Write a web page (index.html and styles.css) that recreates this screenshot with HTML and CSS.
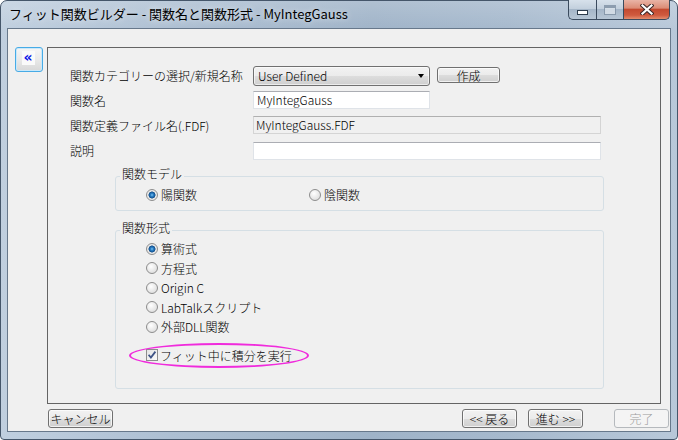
FILE: index.html
```html
<!DOCTYPE html>
<html lang="ja">
<head>
    <meta charset="UTF-8">
    <meta name="viewport" content="width=device-width, initial-scale=1.0">
    <title>フィット関数ビルダー</title>
    <link rel="stylesheet" href="styles.css">
</head>
<body>
    <div class="window">
        <div class="titlebar">
            <span class="title">フィット関数ビルダー - 関数名と関数形式 - MyIntegGauss</span>
            <div class="caption-buttons">
                <span class="cap-btn cap-min"><i class="min-icon"></i></span>
                <span class="cap-btn cap-max"><i class="max-icon"></i></span>
                <span class="cap-btn cap-close">
                    <svg width="14" height="11" viewBox="0 0 14 11">
                        <path d="M2.5 1.5 L11.5 9.5 M11.5 1.5 L2.5 9.5" stroke="#3b2626" stroke-width="4.2" stroke-linecap="square"/>
                        <path d="M2.5 1.5 L11.5 9.5 M11.5 1.5 L2.5 9.5" stroke="#fff" stroke-width="2.2" stroke-linecap="square"/>
                    </svg>
                </span>
            </div>
        </div>

        <div class="client">
            <div class="main-row">
                <button class="collapse-btn"><span class="collapse-icon">&laquo;</span></button>

                <div class="panel">
                    <div class="form-grid">
                        <span class="form-label">関数カテゴリーの選択/新規名称</span>
                        <div class="field-row">
                            <div class="combo">
                                <span>User Defined</span>
                                <span class="combo-arrow"></span>
                            </div>
                            <button class="btn btn-create">作成</button>
                        </div>

                        <span class="form-label">関数名</span>
                        <div class="textbox short">MyIntegGauss</div>

                        <span class="form-label">関数定義ファイル名(.FDF)</span>
                        <div class="textbox long readonly">MyIntegGauss.FDF</div>

                        <span class="form-label">説明</span>
                        <div class="textbox long last"></div>
                    </div>

                    <fieldset class="group group-model">
                        <legend>関数モデル</legend>
                        <div class="option-row">
                            <span class="option"><span class="radio checked"></span>陽関数</span>
                            <span class="option"><span class="radio"></span>陰関数</span>
                        </div>
                    </fieldset>

                    <fieldset class="group group-form">
                        <legend>関数形式</legend>
                        <ul class="radio-list">
                            <li><span class="radio checked"></span>算術式</li>
                            <li><span class="radio"></span>方程式</li>
                            <li><span class="radio"></span>Origin C</li>
                            <li><span class="radio"></span>LabTalkスクリプト</li>
                            <li><span class="radio"></span>外部DLL関数</li>
                        </ul>
                        <div class="check-option">
                            <span class="checkbox">
                                <svg width="10" height="10" viewBox="0 0 10 10">
                                    <path d="M1.6 4.8 L3.9 7.6 L8.4 1.6" fill="none" stroke="#3f5487" stroke-width="1.8"/>
                                </svg>
                            </span>
                            フィット中に積分を実行
                            <span class="highlight"></span>
                        </div>
                    </fieldset>
                </div>
            </div>

            <div class="footer">
                <button class="btn btn-cancel">キャンセル</button>
                <div class="nav">
                    <button class="btn btn-nav">&lt;&lt; 戻る</button>
                    <button class="btn btn-nav btn-next">進む &gt;&gt;</button>
                    <button class="btn btn-nav btn-finish" disabled>完了</button>
                </div>
            </div>
        </div>
    </div>
</body>
</html>
```

FILE: styles.css
```css
* {
    box-sizing: border-box;
}

body {
    margin: 0;
    background: #fff;
    font-family: "Noto Sans CJK JP", "Noto Sans", sans-serif;
    font-size: 12px;
    font-weight: 300;
    color: #000;
}

/* window frame */
.window {
    width: 678px;
    height: 440px;
    display: flex;
    flex-direction: column;
    padding: 0 6px 7px;
    border: 1px solid #45566a;
    border-radius: 7px 7px 4px 4px;
    background:
        linear-gradient(rgba(255, 255, 255, 0.18), rgba(255, 255, 255, 0) 30px),
        linear-gradient(to right, #c0cfdf 0%, #adbfd2 25%, #9fb3c8 55%, #a6b9cd 75%, #b8c8d9 100%);
}

.titlebar {
    height: 27px;
    display: flex;
    justify-content: space-between;
    align-items: flex-start;
    flex: none;
}

.title {
    padding-left: 2px;
    font-size: 13px;
    font-weight: 400;
    line-height: 26px;
    white-space: nowrap;
    text-shadow: 0 0 6px rgba(255, 255, 255, 0.7);
}

.caption-buttons {
    display: flex;
    margin-top: -1px;
    margin-right: 1px;
}

.cap-btn {
    height: 20px;
    display: flex;
    justify-content: center;
    border: 1px solid #3b4b5e;
    border-top: none;
}

.cap-min {
    width: 28px;
    align-items: flex-end;
    padding-bottom: 4px;
    border-right: none;
    border-radius: 0 0 0 5px;
    background: linear-gradient(#d7e1eb 0%, #c3d0dd 45%, #a5b6c8 50%, #b7c6d5 100%);
}

.cap-max {
    width: 27px;
    align-items: center;
    border-right: none;
    background: linear-gradient(#d7e1eb 0%, #c3d0dd 45%, #a5b6c8 50%, #b7c6d5 100%);
}

.cap-close {
    width: 47px;
    align-items: center;
    border-radius: 0 0 5px 0;
    background: linear-gradient(#e9b4a6 0%, #dc8c76 42%, #c44a30 50%, #cf5a3e 80%, #e48d6e 100%);
}

.min-icon {
    display: block;
    width: 11px;
    height: 5px;
    border: 1px solid #2d3c4c;
    background: #fff;
}

.max-icon {
    display: block;
    width: 12px;
    height: 10px;
    border: 1px solid #7f90a3;
    border-top-width: 3px;
    background: #dbe3eb;
    opacity: 0.8;
}

/* client area */
.client {
    flex: 1;
    display: flex;
    flex-direction: column;
    background: #f0f0f0;
    border: 1px solid #67788b;
}

.main-row {
    display: flex;
    align-items: flex-start;
    padding: 18px 0 0 7px;
}

.collapse-btn {
    width: 28px;
    height: 25px;
    padding: 0 2px 3px 0;
    display: flex;
    align-items: center;
    justify-content: center;
    border: 1px solid #47abe6;
    border-radius: 3px;
    background: linear-gradient(#f6f6f6, #e9e9e9 50%, #d8d8d8);
    box-shadow: inset 0 0 0 1px #c9e8fa;
}

.collapse-icon {
    width: 13px;
    height: 14px;
    background: #fafafa;
    color: #0a14e6;
    font-family: "DejaVu Sans", sans-serif;
    font-weight: bold;
    font-size: 14px;
    line-height: 13px;
    text-align: center;
}

.panel {
    width: 614px;
    height: 357px;
    margin-left: 4px;
    padding: 18px 0 0 22px;
    border: 1px solid #646464;
}

/* name / category fields */
.form-grid {
    display: grid;
    grid-template-columns: 183px auto;
    grid-auto-rows: 25px;
    align-items: start;
    justify-items: start;
}

.form-label {
    line-height: 19px;
    white-space: nowrap;
}

.field-row {
    display: flex;
    align-items: flex-start;
}

.combo {
    width: 177px;
    height: 20px;
    display: flex;
    align-items: center;
    justify-content: space-between;
    padding: 0 5px 0 4px;
    border: 1px solid #707070;
    border-radius: 3px;
    background: linear-gradient(#f2f2f2 0%, #ebebeb 50%, #dddddd 50%, #cfcfcf 100%);
    box-shadow: inset 0 0 0 1px rgba(255, 255, 255, 0.6);
    line-height: 18px;
}

.combo-arrow {
    width: 0;
    height: 0;
    border-left: 3.5px solid transparent;
    border-right: 3.5px solid transparent;
    border-top: 4px solid #000;
}

.btn {
    height: 19px;
    padding: 0;
    border: 1px solid #707070;
    border-radius: 3px;
    background: linear-gradient(#f2f2f2 0%, #ebebeb 50%, #dddddd 50%, #cfcfcf 100%);
    box-shadow: inset 0 0 0 1px rgba(255, 255, 255, 0.7);
    font: inherit;
    line-height: 16px;
    color: #000;
    white-space: nowrap;
}

.btn-create {
    width: 63px;
    height: 16px;
    margin: 1px 0 0 7px;
    line-height: 13px;
}

.textbox {
    height: 18px;
    padding: 0 3px;
    border: 1px solid #dfe3e8;
    border-top-color: #abadb3;
    background: #fff;
    line-height: 16px;
    white-space: nowrap;
}

.textbox.short {
    width: 177px;
}

.textbox.long {
    width: 348px;
}

.textbox.readonly {
    padding-left: 2px;
    background: #f0f0f0;
    border-color: #d4d4d4;
    border-top-color: #b0b0b0;
}

.textbox.last {
    margin-top: 1px;
}

/* group boxes */
.group {
    width: 489px;
    margin: 2px 0 0 45px;
    padding: 0;
    min-inline-size: 0;
    border: 1px solid #d5dfe5;
    border-radius: 3px;
}

.group legend {
    margin-left: 4px;
    padding: 0 2px 4px;
    font-size: 12px;
    line-height: 12px;
}

.group-model {
    padding-bottom: 9px;
}

.group-form {
    margin-top: 11px;
    padding-bottom: 23px;
}

.option-row {
    display: flex;
    padding: 4px 0 0 30px;
}

.option {
    width: 163px;
    display: flex;
    align-items: center;
    line-height: 13px;
}

.radio {
    width: 12px;
    height: 12px;
    margin-right: 3px;
    flex: none;
    border: 1px solid #8d8d8d;
    border-radius: 50%;
    background: radial-gradient(circle at 40% 35%, #ffffff 0, #f0f0f0 35%, #d6d6d6 100%);
}

.radio.checked {
    background: radial-gradient(circle at 50% 50%, #7cc6f5 0, #2a7ec4 1.5px, #124f8c 3.2px, #e6e6e6 3.8px, #f4f4f4 100%);
}

.radio-list {
    margin: 0;
    padding: 1px 0 0 30px;
    list-style: none;
}

.radio-list li {
    height: 19.5px;
    display: flex;
    align-items: center;
}

.check-option {
    position: relative;
    height: 20px;
    margin: 8.5px 0 0 30px;
    display: flex;
    align-items: center;
}

.checkbox {
    width: 12px;
    height: 12px;
    margin-right: 2px;
    display: flex;
    align-items: center;
    justify-content: center;
    border: 1px solid #8d8d8d;
    background: linear-gradient(135deg, #e4e4e4, #fbfbfb);
}

/* pink callout ring round the option */
.highlight {
    position: absolute;
    left: -17px;
    top: -2px;
    width: 180px;
    height: 25px;
    border: 2px solid #f02bdc;
    border-radius: 50%;
}

/* bottom buttons */
.footer {
    display: flex;
    align-items: flex-start;
    margin-top: 5px;
    padding: 0 1px 0 40px;
}

.btn-cancel {
    width: 65px;
}

.nav {
    display: flex;
    margin-left: auto;
}

.btn-nav {
    width: 55px;
}

.btn-next {
    margin-left: 11px;
}

.btn-finish {
    margin-left: 31px;
    border-color: #b5b9bd;
    background: #f4f4f4;
    box-shadow: none;
    color: #9a9a9a;
}
```
